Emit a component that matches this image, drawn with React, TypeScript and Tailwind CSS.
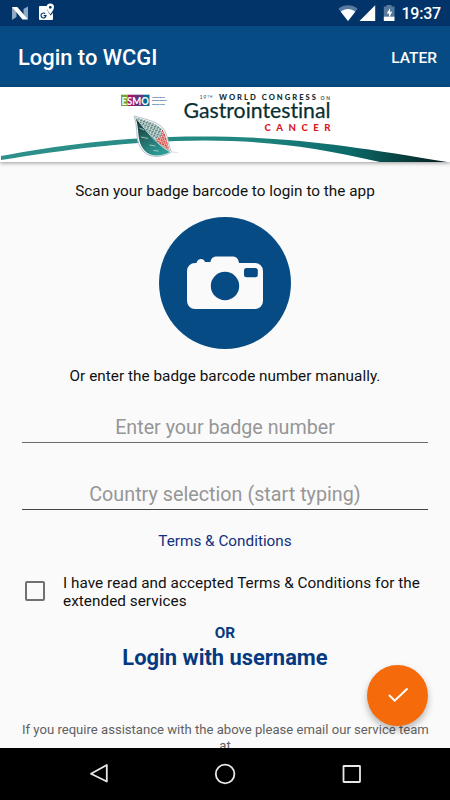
import type { FC } from "react";

const StatusBar: FC = () => {
  return (
    <div className="flex h-[26px] shrink-0 items-center bg-[#033469] text-white">
      <svg className="h-[26px] w-[60px]" viewBox="0 0 60 26">
        <path d="M12 7l4.500 2.500V17L12 20z" fill="#8fa9c4" />
        <path d="M28 6.500v13L23.500 16V9z" fill="#8fa9c4" />
        <path d="M12 7h5.300L28 19.500h-5.500z" fill="#fff" />
        <path d="M40 6h7.300c-.8 3 .2 5.300 2.200 8l1.200 1.500 2.300-2.800V19a1 1 0 0 1-1 1H40a1 1 0 0 1-1-1V7a1 1 0 0 1 1-1z" fill="#fff" />
        <path d="M50.300 3.500a3.700 3.700 0 0 0-3.700 3.700c0 2.700 3.700 7 3.700 7s3.700-4.300 3.700-7a3.700 3.700 0 0 0-3.700-3.700zm0 2.400a1.400 1.400 0 1 1 0 2.800 1.400 1.400 0 0 1 0-2.800z" fill="#fff" fillRule="evenodd" />
        <path d="M45.300 13.700a2.500 2.500 0 1 0 .7 1.900h-2.300" fill="none" stroke="#033469" strokeWidth="1.100" />
      </svg>
      <div className="ml-auto flex items-center pr-[9px]">
        <svg className="h-[26px] w-[66px]" viewBox="335 0 66 26">
          <path d="M348 21l-9.600-12.300c5.500-4.600 13.700-4.600 19.200 0z" fill="#577b9f" />
          <path d="M348 21l-7.200-9.300c4.300-3.500 10.100-3.500 14.400 0z" fill="#fff" />
          <path d="M375.200 5.200V21h-15.700z" fill="#fff" />
          <path d="M386.500 5h5v1.500h3V17h-10.700V6.500h2.700z" fill="#577b9f" />
          <path d="M383.800 16.700h10.700V21h-10.700z" fill="#fff" />
          <path d="M390 8.200v3.500h2.200l-3.200 6v-4.300h-2.300z" fill="#fff" />
        </svg>
        <span className="relative top-px text-[16px] leading-none font-medium tracking-[-0.2px]">19:37</span>
      </div>
    </div>
  );
};

const Banner: FC = () => {
  return (
    <div className="h-[75px] shrink-0 bg-white shadow-[0_1px_4px_rgba(0,0,0,0.4)]">
      <svg className="block h-[75px] w-[450px]" viewBox="0 0 450 75">
        <defs>
          <linearGradient id="swoosh" x1="0" x2="1">
            <stop offset="0" stopColor="#30918c" />
            <stop offset="0.55" stopColor="#218680" />
            <stop offset="0.78" stopColor="#0b6a69" />
            <stop offset="1" stopColor="#071d1e" />
          </linearGradient>
          <linearGradient id="leaf" x1="0" y1="0" x2="0.6" y2="1">
            <stop offset="0" stopColor="#0c2c2e" />
            <stop offset="0.45" stopColor="#23615f" />
            <stop offset="1" stopColor="#2c9a95" />
          </linearGradient>
          <pattern id="cells" width="3" height="3" patternUnits="userSpaceOnUse" patternTransform="rotate(25)">
            <rect width="3" height="3" fill="#dbe6e4" />
            <path d="M0 0h2v1.400H0zM1 2h1.500v1H1z" fill="#55817e" />
          </pattern>
          <pattern id="redCells" width="3" height="3" patternUnits="userSpaceOnUse" patternTransform="rotate(25)">
            <rect width="3" height="3" fill="#f3c9c5" />
            <path d="M0 0h2v2H0zM2 2h1v1H2z" fill="#d94c47" />
          </pattern>
        </defs>
        <path d="M1 69C55 59 120 49.500 200 49.500C290 49.500 350 59 447 75H380C315 60 270 54 205 53.500C125 54 65 63 1 73z" fill="url(#swoosh)" />
        <path d="M134 29C147 32.500 160 35 165 44C169 52 168 59 171.500 65C162 71 149 71 143 64C134 54 139 43 134 29z" fill="#fff" stroke="#b3bfcb" strokeWidth="1" />
        <path d="M135.500 30.500C148 34 159 36 164 45C167.500 52 167 59 170 64.500C158 56 147 44 135.500 30.500z" fill="url(#cells)" />
        <path d="M162 42C168 51 167 58 170 64.500L155 53.500l3-2.500 4-1z" fill="url(#redCells)" />
        <path d="M135.500 30.500C147 44 157 56 170 65C161 70 150 70 144 63C136 53 140 43 135.500 30.500z" fill="url(#leaf)" />
        <path d="M135.500 30.500C147 45 157 58 170.500 65L178 65.500" fill="none" stroke="#d7e2e5" strokeWidth="0.900" />
        <path d="M139.500 41l4.500 2M141 50l7 1.500M149.500 58l6 1M153.500 63.500l5 .5" stroke="#d2e7e4" strokeWidth="0.700" />
        <g>
          <rect x="121" y="7.700" width="7" height="11.300" fill="#74a52c" />
          <rect x="128" y="7.700" width="6" height="11.300" fill="#aa165c" />
          <rect x="134" y="7.700" width="9" height="11.300" fill="#633382" />
          <rect x="143" y="7.700" width="6.500" height="11.300" fill="#076b91" />
        </g>
        <text x="121.600" y="17.700" fill="#fff" fontFamily="Lato, sans-serif" fontWeight="700" fontSize="12" textLength="27.500" lengthAdjust="spacingAndGlyphs">ESMO</text>
        <g fill="#3c679b" fontFamily="Lato, sans-serif" fontWeight="700" fontSize="2.600">
          <text x="152" y="11" textLength="13">GOOD SCIENCE</text>
          <text x="152" y="14.300" textLength="15">BETTER MEDICINE</text>
          <text x="152" y="17.600" textLength="13">BEST PRACTICE</text>
        </g>
        <g fontFamily="Lato, sans-serif">
          <text x="199.500" y="12.200" fontSize="5.500" fill="#43585b" textLength="13">
            19<tspan fontSize="3.500" dy="-1.300">TH</tspan>
          </text>
          <text x="219" y="12.900" fontSize="7.600" fontWeight="900" fill="#142c30" textLength="97">WORLD CONGRESS</text>
          <text x="320.500" y="12.900" fontSize="5" fontWeight="700" fill="#43585b" textLength="9.500">ON</text>
          <text
            className="[font-variant-ligatures:none]"
            x="183.500"
            y="31.300"
            fontSize="21.500"
            fontWeight="400"
            fill="#082f32"
            stroke="#082f32"
            strokeWidth="0.250"
            textLength="147"
            lengthAdjust="spacingAndGlyphs"
          >
            Gastrointestinal
          </text>
          <text x="264.500" y="43.800" fontSize="9.600" fontWeight="900" fill="#dc1722" textLength="66">CANCER</text>
        </g>
      </svg>
    </div>
  );
};

const CameraButton: FC = () => {
  return (
    <button className="mx-auto mt-[16.500px] block h-[132px] w-[132px] shrink-0 rounded-full bg-[#064b84]">
      <svg className="block h-full w-full" viewBox="0 0 132 132">
        <path d="M36 46h1.500c1-5 7.500-5 8.500-1h5.500c.5-4 3-5.500 6.500-5.500h15.500c3.500 0 6 2 6.500 6.500H96a8 8 0 0 1 8 8V84a8 8 0 0 1-8 8H36a8 8 0 0 1-8-8V54a8 8 0 0 1 8-8z" fill="#fafafa" />
        <circle cx="66" cy="69" r="14.200" fill="#064b84" />
        <rect x="85" y="51" width="13.800" height="9.200" rx="2.500" fill="#064b84" />
      </svg>
    </button>
  );
};

const NavBar: FC = () => {
  return (
    <nav className="h-[52px] shrink-0 bg-black">
      <svg className="block h-[52px] w-[450px]" viewBox="0 748 450 52" fill="none" stroke="#e8e8e8" strokeWidth="1.800" strokeLinejoin="round">
        <path d="M106.800 765v16.500L91 773.800z" />
        <circle cx="225.100" cy="774" r="9.300" />
        <rect x="343.500" y="766" width="16.500" height="16" rx="0.500" />
      </svg>
    </nav>
  );
};

const App: FC = () => {
  return (
    <div className="flex h-[800px] w-[450px] flex-col overflow-hidden bg-[#fafafa] font-[Roboto,sans-serif]">
      <StatusBar />
      <header className="flex h-[61px] shrink-0 items-center justify-between bg-[#064b84] pt-[3px] pr-[13px] pl-[18px] text-white">
        <h1 className="text-[21.9px] leading-none font-medium">Login to WCGI</h1>
        <button className="pt-[2px] text-[15.5px] leading-none font-medium">LATER</button>
      </header>
      <Banner />

      <main className="relative flex min-h-0 flex-1 flex-col overflow-hidden px-[22px] pt-[20px] text-center text-[15.3px] leading-[18px] text-[#111]">
        <p className="tracking-[0.02px]">Scan your badge barcode to login to the app</p>
        <CameraButton />
        <p className="mt-[18.500px] tracking-[0.03px]">Or enter the badge barcode number manually.</p>

        <input
          className="mt-[27px] h-[31px] w-full shrink-0 border-b border-[#6b6b6b] text-center text-[19.7px] outline-none placeholder:text-[#969696]"
          placeholder="Enter your badge number"
        />
        <input
          className="mt-[36px] h-[31px] w-full shrink-0 border-b border-[#444] text-center text-[19.7px] tracking-[0.03px] outline-none placeholder:text-[#969696]"
          placeholder="Country selection (start typing)"
        />

        <a className="mt-[22px] text-[#14307d]">Terms &amp; Conditions</a>

        <label className="mt-[24px] flex items-start pl-[3px] text-left">
          <span className="mt-[7px] h-[20px] w-[20px] shrink-0 rounded-[2px] border-2 border-[#707070]" />
          <span className="ml-[18px] w-[370px] tracking-[0.04px]">I have read and accepted Terms &amp; Conditions for the extended services</span>
        </label>

        <p className="mt-[14px] font-bold text-[#063a80]">OR</p>
        <a className="mt-[3px] text-[21.9px] leading-[26px] font-bold text-[#063a80]">Login with username</a>

        <p className="mt-[51px] shrink-0 text-[13.1px] leading-[15.500px] whitespace-nowrap text-[#616161]">
          If you require assistance with the above please email our service team
          <br />
          at
        </p>

        <button className="absolute top-[502.500px] right-[22px] flex h-[61px] w-[61px] items-center justify-center rounded-full bg-[#f56b0b] shadow-[0_4px_7px_rgba(0,0,0,0.28)]">
          <svg className="h-[26px] w-[26px]" viewBox="0 0 26 26" fill="none" stroke="#fff" strokeWidth="2">
            <path d="M4 13l5.700 5.700L22.500 6.500" />
          </svg>
        </button>
      </main>
      <NavBar />
    </div>
  );
};

export default App;
